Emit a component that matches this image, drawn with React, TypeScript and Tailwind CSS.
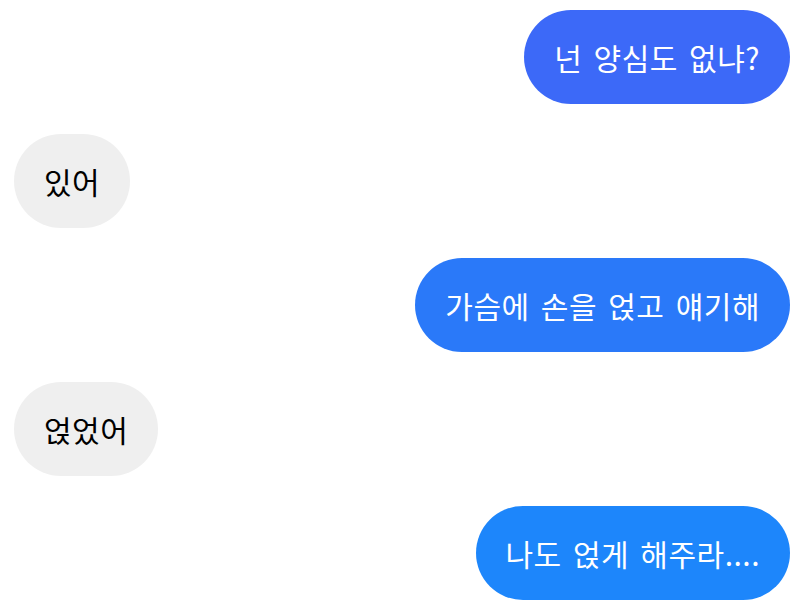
const messages: { text: string; mine: boolean; color: string }[] = [
  { text: "넌 양심도 없냐?", mine: true, color: "bg-[#3c69f8]" },
  { text: "있어", mine: false, color: "bg-[#efefef]" },
  { text: "가슴에 손을 얹고 얘기해", mine: true, color: "bg-[#2a79f9]" },
  { text: "얹었어", mine: false, color: "bg-[#efefef]" },
  { text: "나도 얹게 해주라....", mine: true, color: "bg-[#1d86fb]" },
]

export default function App() {
  return (
    <div
      className="w-[800px] h-[613px] bg-white flex flex-col gap-[30px] pt-[10px] pl-[14px] pr-[10px] overflow-hidden"
      style={{ fontFamily: '"Noto Sans CJK KR", "Noto Sans", sans-serif' }}
    >
      {messages.map((m, i) => (
        <div key={i} className={`flex ${m.mine ? "justify-end" : "justify-start"}`}>
          <div
            className={`h-[94px] px-[30px] rounded-full flex items-center text-[30px] leading-none tracking-[0.5px] [word-spacing:4px] ${m.color} ${
              m.mine ? "text-white" : "text-black"
            }`}
          >
            {m.text}
          </div>
        </div>
      ))}
    </div>
  )
}
